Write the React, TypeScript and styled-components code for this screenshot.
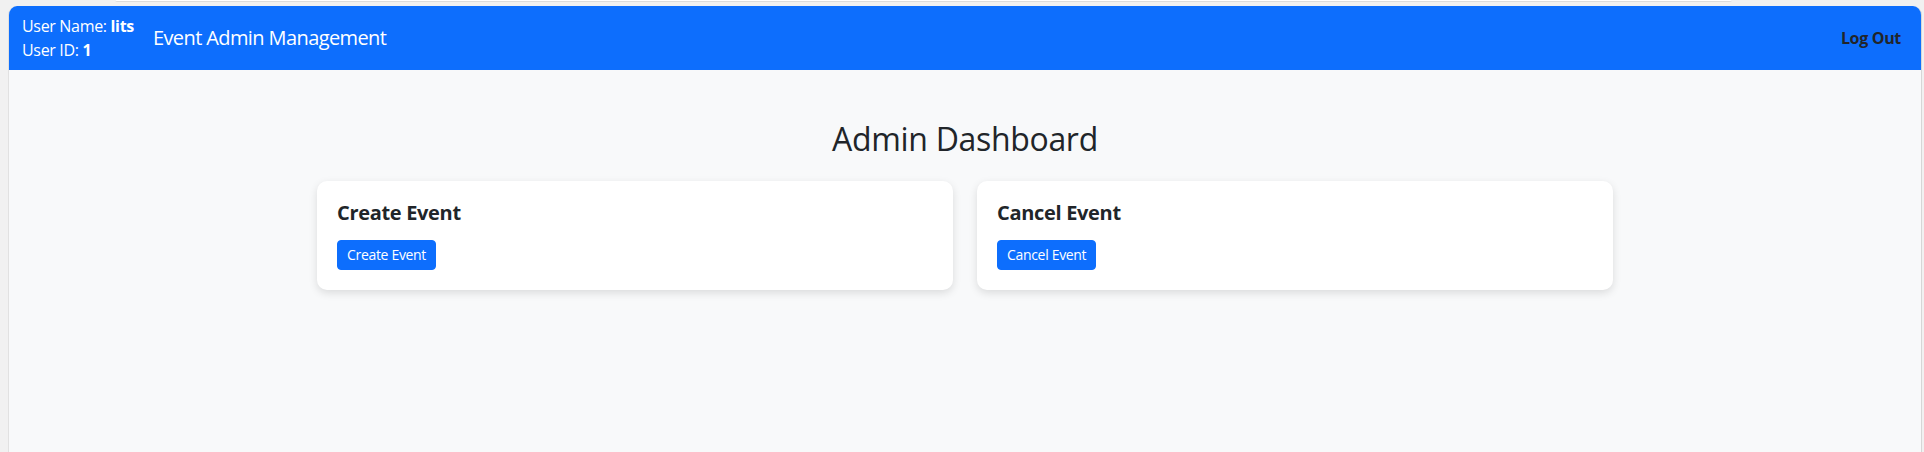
import React from "react";
import styled, { createGlobalStyle } from "styled-components";

const GlobalStyle = createGlobalStyle`
  html, body {
    margin: 0;
    padding: 0;
    background: #f1f1f1;
  }
  body {
    font-family: "Open Sans", "Noto Sans", "Liberation Sans", sans-serif;
    letter-spacing: -0.02em;
    color: #212529;
  }
  * { box-sizing: border-box; }
`;

const Frame = styled.div`
  display: flex;
  flex-direction: column;
  min-height: 452px;
  padding: 0 2px 0 8px;
  background: #f1f1f1;
`;

const ChromeStrip = styled.div`
  height: 6px;
  display: flex;
  align-items: flex-start;
`;

const AddressEdge = styled.div`
  margin-left: 107px;
  width: 1617px;
  height: 2px;
  background: #ffffff;
  border-bottom: 1px solid #dcdcdc;
  border-radius: 0 0 3px 3px;
`;

const Page = styled.div`
  flex: 1;
  display: flex;
  flex-direction: column;
  background: #f8f9fa;
  border-left: 1px solid #e1e1e1;
  border-right: 1px solid #d6d6d6;
  border-radius: 9px 9px 0 0;
  overflow: hidden;
`;

const NavBar = styled.header`
  height: 64px;
  display: flex;
  align-items: center;
  gap: 19px;
  padding: 0 20px 0 13px;
  background: #0d6efd;
  color: #ffffff;
`;

const UserInfo = styled.div`
  display: flex;
  flex-direction: column;
`;

const InfoLine = styled.div`
  font-size: 16px;
  line-height: 24px;
  white-space: nowrap;

  b {
    font-weight: 700;
  }
`;

const Brand = styled.div`
  font-size: 20px;
  line-height: 30px;
  white-space: nowrap;
  letter-spacing: -0.03em;
`;

const LogoutButton = styled.button`
  margin-left: auto;
  background: none;
  border: none;
  padding: 0;
  font-family: inherit;
  letter-spacing: inherit;
  font-size: 16px;
  font-weight: 700;
  line-height: 24px;
  color: #212529;
  cursor: pointer;
`;

const Main = styled.main`
  width: 1296px;
  margin: 50px auto 0;
`;

const Title = styled.h2`
  margin: 0 0 23px;
  font-size: 32px;
  line-height: 38px;
  font-weight: 500;
  text-align: center;
  color: #212529;
`;

const CardGrid = styled.div`
  display: grid;
  grid-template-columns: 1fr 1fr;
  gap: 24px;
`;

const Card = styled.section`
  background: #ffffff;
  border-radius: 10px;
  padding: 20px;
  box-shadow: 0 3px 8px rgba(0, 0, 0, 0.12);
`;

const CardTitle = styled.h5`
  margin: 0 0 15px;
  font-size: 20px;
  line-height: 24px;
  font-weight: 700;
  color: #212529;
`;

const SmallButton = styled.button`
  display: inline-block;
  padding: 4px 9px;
  border: 1px solid #0d6efd;
  border-radius: 4px;
  background: #0d6efd;
  color: #ffffff;
  font-family: inherit;
  letter-spacing: inherit;
  font-size: 14px;
  line-height: 20px;
  cursor: pointer;
`;

const actions = [
  { title: "Create Event", label: "Create Event" },
  { title: "Cancel Event", label: "Cancel Event" },
];

export default function App() {
  return (
    <>
      <GlobalStyle />
      <Frame>
        <ChromeStrip>
          <AddressEdge />
        </ChromeStrip>
        <Page>
          <NavBar>
            <UserInfo>
              <InfoLine>
                User Name: <b>lits</b>
              </InfoLine>
              <InfoLine>
                User ID: <b>1</b>
              </InfoLine>
            </UserInfo>
            <Brand>Event Admin Management</Brand>
            <LogoutButton>Log Out</LogoutButton>
          </NavBar>
          <Main>
            <Title>Admin Dashboard</Title>
            <CardGrid>
              {actions.map((a) => (
                <Card key={a.title}>
                  <CardTitle>{a.title}</CardTitle>
                  <SmallButton>{a.label}</SmallButton>
                </Card>
              ))}
            </CardGrid>
          </Main>
        </Page>
      </Frame>
    </>
  );
}
